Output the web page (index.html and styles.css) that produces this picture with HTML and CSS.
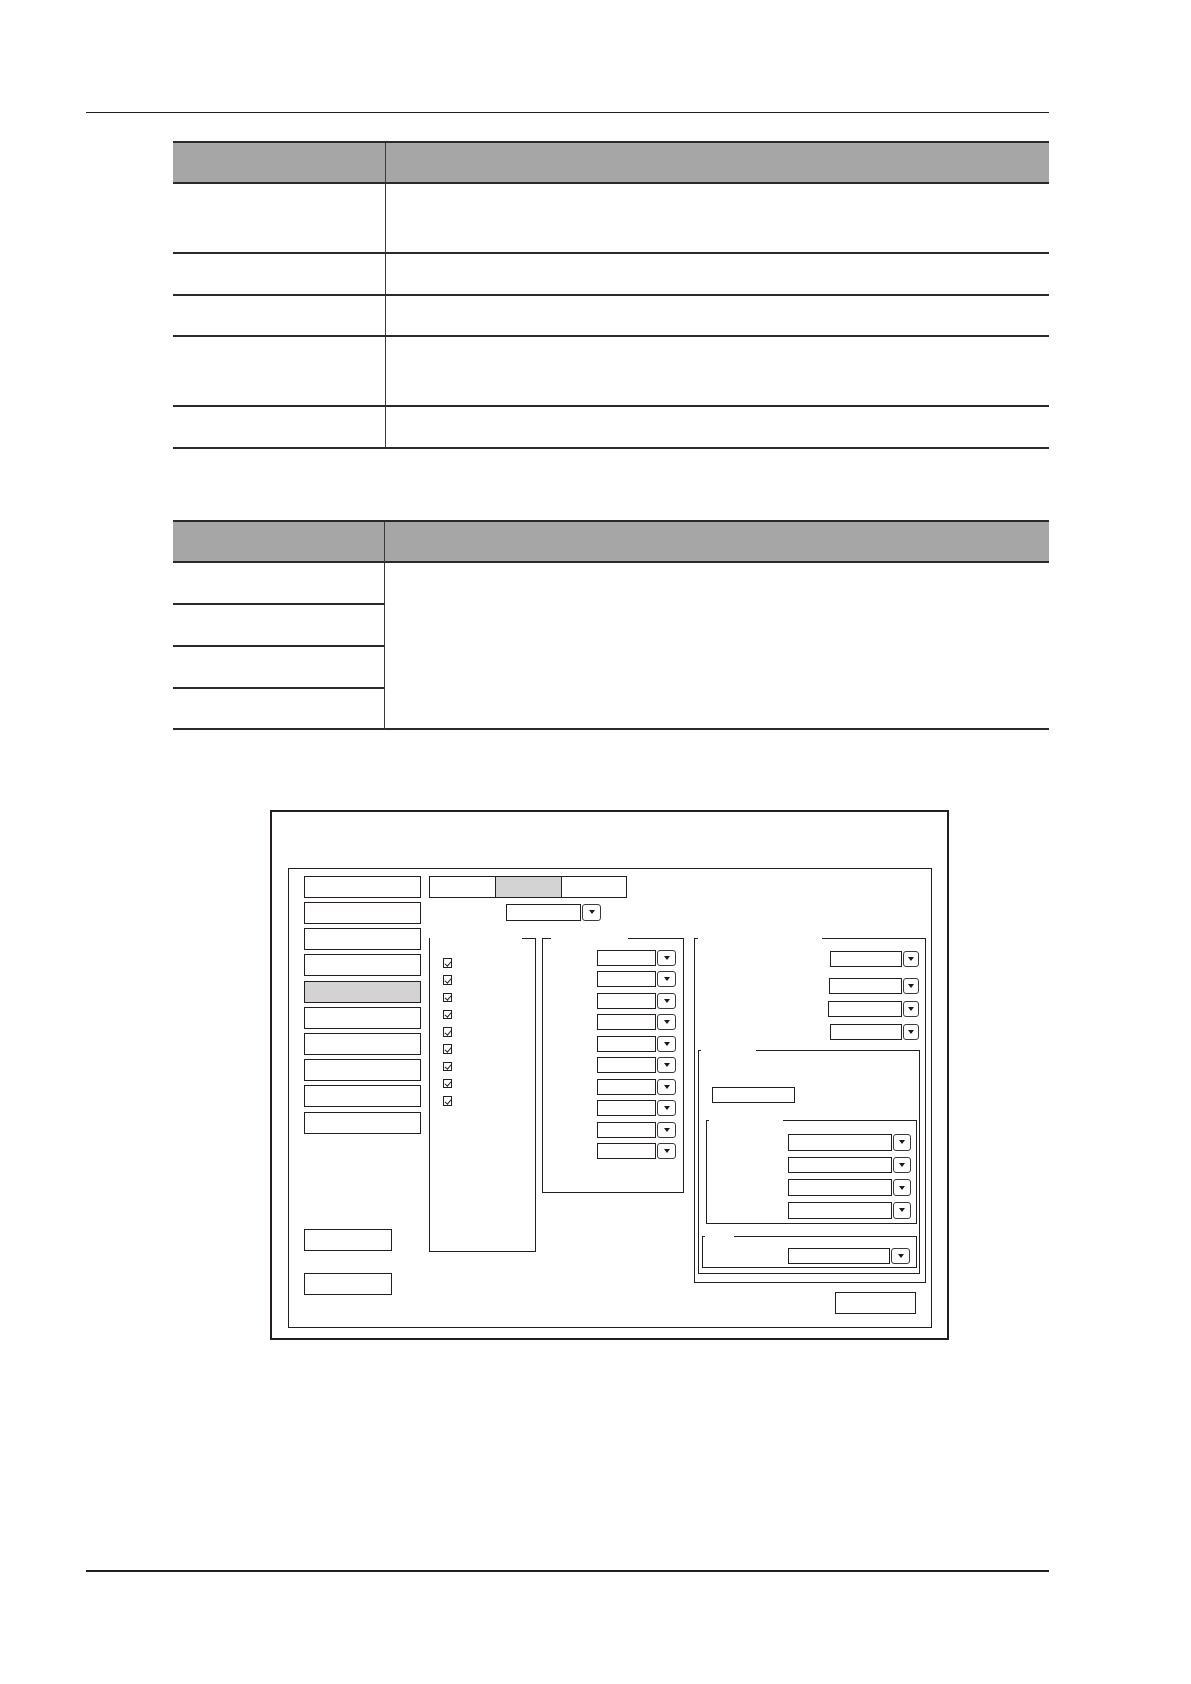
FILE: index.html
```html
<!DOCTYPE html>
<html lang="en">
<head>
<meta charset="utf-8">
<title>Settings</title>
<link rel="stylesheet" href="styles.css">
</head>
<body>
<div class="page">
  <div class="rule-top"></div>

  <div class="spec spec-a">
    <div class="cell k head"></div><div class="cell head"></div>
    <div class="cell k"></div><div class="cell"></div>
    <div class="cell k"></div><div class="cell"></div>
    <div class="cell k"></div><div class="cell"></div>
    <div class="cell k"></div><div class="cell"></div>
    <div class="cell k"></div><div class="cell"></div>
  </div>

  <div class="spec spec-b">
    <div class="cell k head"></div><div class="cell head"></div>
    <div class="cell k"></div><div class="cell merge"></div>
    <div class="cell k"></div>
    <div class="cell k"></div>
    <div class="cell k"></div>
  </div>

  <div class="dialog">
    <div class="frame">
      <div class="side">
        <div class="nav">
          <div class="btn"></div>
          <div class="btn"></div>
          <div class="btn"></div>
          <div class="btn"></div>
          <div class="btn on"></div>
          <div class="btn"></div>
          <div class="btn"></div>
          <div class="btn"></div>
          <div class="btn"></div>
          <div class="btn"></div>
        </div>
        <div class="side-bottom">
          <div class="btn"></div>
          <div class="btn"></div>
        </div>
      </div>

      <div class="main">
        <div class="tabs">
          <div class="tab"></div>
          <div class="tab on"></div>
          <div class="tab"></div>
        </div>
        <div class="mode">
          <div class="dd"><div class="dd-box"></div><div class="dd-btn"></div></div>
        </div>

        <div class="groups">
          <div class="group g1">
            <div class="gtop"><div class="seg"></div></div>
            <div class="checks">
              <div class="chk"></div>
              <div class="chk"></div>
              <div class="chk"></div>
              <div class="chk"></div>
              <div class="chk"></div>
              <div class="chk"></div>
              <div class="chk"></div>
              <div class="chk"></div>
              <div class="chk"></div>
            </div>
          </div>

          <div class="group g2">
            <div class="gtop"><div class="seg l"></div><div class="gap"></div><div class="seg fill"></div></div>
            <div class="ddlist">
              <div class="dd"><div class="dd-box"></div><div class="dd-btn"></div></div>
              <div class="dd"><div class="dd-box"></div><div class="dd-btn"></div></div>
              <div class="dd"><div class="dd-box"></div><div class="dd-btn"></div></div>
              <div class="dd"><div class="dd-box"></div><div class="dd-btn"></div></div>
              <div class="dd"><div class="dd-box"></div><div class="dd-btn"></div></div>
              <div class="dd"><div class="dd-box"></div><div class="dd-btn"></div></div>
              <div class="dd"><div class="dd-box"></div><div class="dd-btn"></div></div>
              <div class="dd"><div class="dd-box"></div><div class="dd-btn"></div></div>
              <div class="dd"><div class="dd-box"></div><div class="dd-btn"></div></div>
              <div class="dd"><div class="dd-box"></div><div class="dd-btn"></div></div>
            </div>
          </div>

          <div class="group g3">
            <div class="gtop"><div class="seg l"></div><div class="gap"></div><div class="seg fill"></div></div>
            <div class="ddlist">
              <div class="dd sp"><div class="dd-box"></div><div class="dd-btn"></div></div>
              <div class="dd"><div class="dd-box wide"></div><div class="dd-btn"></div></div>
              <div class="dd"><div class="dd-box wider"></div><div class="dd-btn"></div></div>
              <div class="dd"><div class="dd-box"></div><div class="dd-btn"></div></div>
            </div>

            <div class="group sub-a">
              <div class="gtop"><div class="seg l"></div><div class="gap"></div><div class="seg fill"></div></div>
              <div class="field"></div>

              <div class="group sub-b">
                <div class="gtop"><div class="seg l"></div><div class="gap"></div><div class="seg fill"></div></div>
                <div class="ddlist">
                  <div class="dd"><div class="dd-box"></div><div class="dd-btn"></div></div>
                  <div class="dd"><div class="dd-box"></div><div class="dd-btn"></div></div>
                  <div class="dd"><div class="dd-box"></div><div class="dd-btn"></div></div>
                  <div class="dd"><div class="dd-box"></div><div class="dd-btn"></div></div>
                </div>
              </div>

              <div class="group sub-c">
                <div class="gtop"><div class="seg l"></div><div class="gap"></div><div class="seg fill"></div></div>
                <div class="ddlist">
                  <div class="dd"><div class="dd-box"></div><div class="dd-btn"></div></div>
                </div>
              </div>
            </div>
          </div>
        </div>

        <div class="foot">
          <div class="btn"></div>
        </div>
      </div>
    </div>
  </div>

  <div class="rule-bottom"></div>
</div>
</body>
</html>
```

FILE: styles.css
```css
* { box-sizing: border-box; }

body {
  margin: 0;
  background: #ffffff;
  font-family: "Liberation Sans", Arial, sans-serif;
}

.page {
  width: 963px;
  margin-left: 86px;
  padding-top: 112px;
  padding-bottom: 100px;
}

.rule-top {
  height: 1px;
  background: #231f20;
}

.rule-bottom {
  margin-top: 229.4px;
  height: 2px;
  background: #231f20;
}

/* ---------- spec tables ---------- */
.spec {
  display: grid;
  margin-left: 87px;
  width: 876px;
  border-top: 2px solid #2a2a2a;
}

.spec-a {
  margin-top: 28.3px;
  grid-template-columns: 213px 1fr;
  grid-template-rows: 41px 70px 42px 41px 70px 42px;
}

.spec-b {
  margin-top: 71px;
  grid-template-columns: 212px 1fr;
  grid-template-rows: 41px 42px 42px 42px 41px;
}

.cell {
  border-bottom: 2px solid #2a2a2a;
}

.cell.k {
  border-right: 1px solid #3a3a3a;
}

.cell.head {
  background: #a7a6a7;
}

.cell.merge {
  grid-row: span 4;
}

/* ---------- dialog ---------- */
.dialog {
  display: flex;
  margin-top: 80px;
  margin-left: 184px;
  width: 678.5px;
  height: 530px;
  border: 2px solid #231f20;
  padding: 56px 15.2px 10.7px 16.3px;
}

.frame {
  flex: 1;
  display: flex;
  border: 1px solid #231f20;
  padding: 6.6px 0 0 15px;
}

.btn {
  height: 22px;
  border: 1px solid #231f20;
  background: #ffffff;
}

.btn.on {
  background: #d3d3d3;
}

.side {
  flex: none;
  width: 117px;
  display: flex;
  flex-direction: column;
}

.nav {
  display: flex;
  flex-direction: column;
  gap: 4.2px;
}

.nav .btn {
  width: 117px;
}

.side-bottom {
  margin-top: 95.8px;
  display: flex;
  flex-direction: column;
  gap: 21.6px;
}

.side-bottom .btn {
  width: 88px;
}

.main {
  flex: 1;
  margin-left: 8px;
  padding-right: 4.4px;
  display: flex;
  flex-direction: column;
}

.tabs {
  display: flex;
  width: 198px;
  height: 21.8px;
  border: 1px solid #231f20;
}

.tab {
  width: 65.6px;
}

.tab + .tab {
  width: 66.2px;
  border-left: 1px solid #231f20;
}

.tab.on {
  background: #d3d3d3;
}

.mode {
  margin-top: 6px;
  margin-left: 76.6px;
}

.mode .dd {
  height: 17px;
}

.mode .dd-box {
  width: 75.6px;
}

.mode .dd-btn {
  width: 18.2px;
}

/* dropdown */
.dd {
  display: flex;
  align-items: stretch;
}

.dd-box {
  border: 1px solid #231f20;
  background: #ffffff;
}

.dd-btn {
  margin-left: 1px;
  border: 1px solid #3a3a3a;
  border-radius: 3px;
  display: flex;
  align-items: center;
  justify-content: center;
}

.dd-btn::after {
  content: "";
  border-left: 3px solid transparent;
  border-right: 3px solid transparent;
  border-top: 4px solid #1a1a1a;
}

/* ---------- groups ---------- */
.groups {
  display: flex;
  align-items: flex-start;
  margin-top: 17.5px;
}

.group {
  flex: none;
  display: flex;
  flex-direction: column;
  border: 1px solid #231f20;
  border-top: none;
}

.gtop {
  flex: none;
  display: flex;
  height: 1px;
}

.seg {
  border-top: 1px solid #231f20;
}

.seg.fill {
  flex: 1;
}

.ddlist {
  display: flex;
  flex-direction: column;
  align-items: flex-end;
}

/* group 1: check list */
.g1 {
  width: 106.4px;
  height: 314px;
}

.g1 .gtop {
  justify-content: flex-end;
}

.g1 .seg {
  width: 12.5px;
}

.checks {
  margin: 19px 0 0 12.5px;
  display: flex;
  flex-direction: column;
  gap: 7.76px;
}

.chk {
  position: relative;
  width: 9.5px;
  height: 9.5px;
  border: 1px solid #222222;
}

.chk::after {
  content: "";
  position: absolute;
  left: 2.6px;
  top: 0.4px;
  width: 2.6px;
  height: 5px;
  border-right: 1px solid #222222;
  border-bottom: 1px solid #222222;
  transform: rotate(40deg);
}

/* group 2 */
.g2 {
  margin-left: 6.7px;
  width: 141.8px;
  height: 255px;
}

.g2 .seg.l { width: 8px; }
.g2 .gap { width: 76.2px; }

.g2 .ddlist {
  margin-top: 10.4px;
  padding-right: 7.5px;
  gap: 5.33px;
}

.g2 .dd { height: 16.2px; }
.g2 .dd-box { width: 59.4px; }
.g2 .dd-btn { width: 18.3px; margin-left: 0.9px; }

/* group 3 */
.g3 {
  margin-left: 9.5px;
  width: 232.6px;
  height: 345px;
}

.g3 > .gtop .seg.l { width: 3px; }
.g3 > .gtop .gap { width: 124.3px; }

.g3 > .ddlist {
  margin-top: 11.5px;
  padding-right: 6.1px;
  gap: 6.5px;
}

.g3 > .ddlist .dd { height: 16.5px; }
.g3 > .ddlist .dd.sp { margin-bottom: 4.1px; }
.g3 > .ddlist .dd-box { width: 71.5px; }
.g3 > .ddlist .dd-box.wide { width: 72.8px; }
.g3 > .ddlist .dd-box.wider { width: 73.7px; }
.g3 > .ddlist .dd-btn { width: 16.6px; }

.sub-a {
  margin: 10.2px 5.3px 0 3px;
  height: 224px;
}

.sub-a > .gtop .seg.l { width: 2.3px; }
.sub-a > .gtop .gap { width: 55.2px; }

.field {
  margin: 35.8px 0 0 13.7px;
  width: 82.2px;
  height: 16px;
  border: 1px solid #231f20;
}

.sub-b {
  margin: 16.8px 1.7px 0 7px;
  height: 104.2px;
}

.sub-b > .gtop .seg.l { width: 2.2px; }
.sub-b > .gtop .gap { width: 74.2px; }

.sub-b .ddlist {
  margin-top: 12.9px;
  padding-right: 5px;
  gap: 5.9px;
}

.sub-b .dd { height: 16.8px; }
.sub-b .dd-box { width: 104.2px; }
.sub-b .dd-btn { width: 18.5px; }

.sub-c {
  margin: 11.8px 1.7px 0 3px;
  height: 32px;
}

.sub-c > .gtop .seg.l { width: 2.3px; }
.sub-c > .gtop .gap { width: 28.9px; }

.sub-c .ddlist {
  margin-top: 10.8px;
  padding-right: 6px;
}

.sub-c .dd { height: 16.4px; }
.sub-c .dd-box { width: 102.2px; }
.sub-c .dd-btn { width: 18.8px; }

/* footer */
.foot {
  display: flex;
  justify-content: flex-end;
  margin-top: 8.9px;
  padding-right: 9.9px;
}

.foot .btn {
  width: 81.4px;
  height: 22px;
}
```
